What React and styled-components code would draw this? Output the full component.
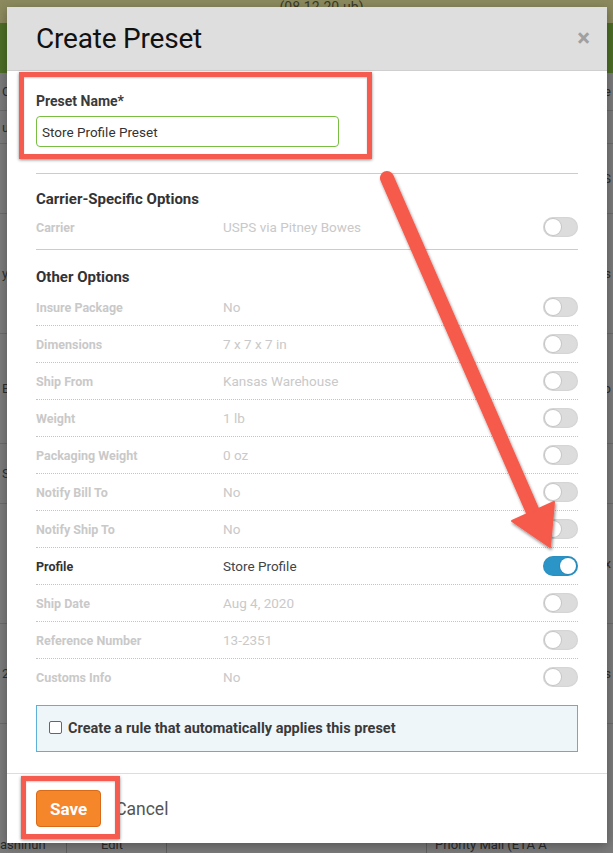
import React from 'react';
import styled, { createGlobalStyle } from 'styled-components';

const GlobalStyle = createGlobalStyle`
  html, body {
    margin: 0;
    padding: 0;
    background: #7b7b7b;
  }
  * { box-sizing: border-box; }
`;

const Page = styled.div`
  position: relative;
  width: 613px;
  height: 853px;
  overflow: hidden;
  font-family: Roboto, "Liberation Sans", Arial, sans-serif;
  background: #7b7b7b;
  display: flex;
  flex-direction: column;
`;

const BgTop = styled.div`
  height: 23px;
  background: #8b895d;
  color: #3a3a2a;
  font-size: 14px;
  text-align: center;
  line-height: 14px;
  padding: 0 0 0 30px;
`;

const BgGreen = styled.div`
  height: 50px;
  background: #4d6d26;
`;

const BgRow = styled.div`
  height: ${p => p.$h || 37}px;
  border-bottom: 1px solid #6a6a6a;
  display: flex;
  align-items: center;
  justify-content: space-between;
  padding: 0 2px;
  color: #2e2e2e;
  font-size: 13px;
`;

const BgBottom = styled.div`
  margin-top: auto;
  height: 14px;
  display: flex;
  align-items: flex-start;
  font-size: 13px;
  color: #2a2a2a;
  line-height: 12px;
`;

const BgCell = styled.div`
  width: ${p => p.$w}px;
  padding-left: ${p => p.$pad || 0}px;
  border-left: ${p => (p.$border ? '1px solid #606060' : 'none')};
  height: 100%;
`;

const Modal = styled.div`
  position: absolute;
  top: 7px;
  left: 7px;
  width: 600px;
  height: 836px;
  background: #fff;
  display: flex;
  flex-direction: column;
  box-shadow: 0 3px 10px rgba(0, 0, 0, 0.3);
`;

const Header = styled.div`
  height: 64px;
  flex: 0 0 auto;
  background: #dedede;
  border-bottom: 1px solid #cfcfcf;
  display: flex;
  align-items: center;
  justify-content: space-between;
  padding: 0 17px 0 29px;
`;

const Title = styled.h2`
  margin: 0;
  font-size: 28px;
  font-weight: 400;
  color: #111;
  letter-spacing: -0.2px;
`;

const Close = styled.span`
  font-size: 24px;
  font-weight: 700;
  color: #a0a0a0;
  line-height: 1;
  margin-top: -2px;
`;

const Body = styled.div`
  flex: 1 1 auto;
  padding: 22px 29px 0;
  display: flex;
  flex-direction: column;
`;

const FieldLabel = styled.label`
  font-size: 14px;
  font-weight: 700;
  color: #3a3a3a;
  line-height: 16px;
`;

const TextInput = styled.div`
  margin-top: 7px;
  width: 303px;
  height: 31px;
  border: 1px solid #79bd43;
  border-radius: 4px;
  display: flex;
  align-items: center;
  padding-left: 5px;
  font-size: 13.5px;
  color: #333;
`;

const Divider = styled.div`
  height: 1px;
  background: #cccccc;
  margin-top: ${p => p.$mt}px;
`;

const SectionTitle = styled.div`
  font-size: 15px;
  font-weight: 700;
  color: #333;
  line-height: 18px;
  margin-top: ${p => p.$mt}px;
`;

const Row = styled.div`
  height: ${p => (p.$first ? 36 : 37)}px;
  margin-top: ${p => p.$mt || 0}px;
  border-top: ${p => (p.$first ? 'none' : '1px dotted #c4c4c4')};
  display: flex;
  align-items: center;
  font-size: 12.5px;
  color: ${p => (p.$active ? '#333' : '#c9c9c9')};
`;

const RowLabel = styled.div`
  width: 187px;
  font-weight: 700;
`;

const RowValue = styled.div`
  flex: 1;
  font-size: 13.5px;
  color: ${p => (p.$active ? '#444' : '#c9c9c9')};
`;

const Toggle = styled.div`
  position: relative;
  width: 35px;
  height: 20px;
  border-radius: 10px;
  background: ${p => (p.$on ? '#2c95c8' : '#dcdcdc')};
  box-shadow: inset 0 0 2px rgba(0, 0, 0, 0.12);

  &::after {
    content: '';
    position: absolute;
    top: 2px;
    left: ${p => (p.$on ? 17 : 2)}px;
    width: 16px;
    height: 16px;
    border-radius: 50%;
    background: #fff;
    box-shadow: 0 0 0 1px ${p => (p.$on ? 'rgba(0,0,0,0.08)' : '#c6c6c6')};
  }
`;

const RuleBox = styled.div`
  margin-top: 10px;
  height: 47px;
  border: 1px solid #5fb0d9;
  background: #eff6fa;
  display: flex;
  align-items: center;
  padding-left: 12px;
  gap: 6px;
  font-size: 14.5px;
  font-weight: 700;
  color: #3a3a3a;
`;

const CheckBox = styled.span`
  width: 13px;
  height: 13px;
  border: 1px solid #666;
  border-radius: 2px;
  background: #fff;
  margin-top: -2px;
`;

const Footer = styled.div`
  flex: 0 0 auto;
  border-top: 1px solid #dddddd;
  padding: 16px 29px 16px;
  display: flex;
  align-items: center;
`;

const SaveButton = styled.button`
  height: 37px;
  padding: 0 13px;
  background: #f5862a;
  border: 1px solid #d86a19;
  border-radius: 4px;
  color: #fff;
  font-family: inherit;
  font-size: 17px;
  font-weight: 700;
`;

const CancelLink = styled.span`
  margin-left: 14px;
  font-size: 17.5px;
  color: #555;
`;

const Highlight = styled.div`
  position: absolute;
  left: ${p => p.$x}px;
  top: ${p => p.$y}px;
  width: ${p => p.$w}px;
  height: ${p => p.$h}px;
  border: 5px solid #f55b4e;
  box-shadow: 0 1px 3px rgba(0, 0, 0, 0.45), inset 0 1px 2px rgba(0, 0, 0, 0.2);
  pointer-events: none;
`;

const ArrowLayer = styled.svg`
  position: absolute;
  left: 0;
  top: 0;
  width: 613px;
  height: 853px;
  pointer-events: none;
`;

const rows = [
  { label: 'Insure Package', value: 'No' },
  { label: 'Dimensions', value: '7 x 7 x 7 in' },
  { label: 'Ship From', value: 'Kansas Warehouse' },
  { label: 'Weight', value: '1 lb' },
  { label: 'Packaging Weight', value: '0 oz' },
  { label: 'Notify Bill To', value: 'No' },
  { label: 'Notify Ship To', value: 'No' },
  { label: 'Profile', value: 'Store Profile', on: true },
  { label: 'Ship Date', value: 'Aug 4, 2020' },
  { label: 'Reference Number', value: '13-2351' },
  { label: 'Customs Info', value: 'No' },
];

const App = () => (
  <Page>
    <GlobalStyle />
    <BgTop>(08-12-20-ub)</BgTop>
    <BgGreen />
    <BgRow $h={38}><span>C</span><span>e</span></BgRow>
    <BgRow $h={33}><span>u</span><span /></BgRow>
    <BgRow $h={70}><span /><span>S</span></BgRow>
    <BgRow $h={120}><span>ys</span><span>os</span></BgRow>
    <BgRow $h={110}><span>E</span><span>o</span></BgRow>
    <BgRow $h={60}><span>S</span><span /></BgRow>
    <BgRow $h={120}><span /><span>x</span></BgRow>
    <BgRow $h={100}><span>2Y</span><span>s</span></BgRow>
    <BgBottom>
      <BgCell $w={66}>ashinun</BgCell>
      <BgCell $w={100} $pad={34} $border>Edit</BgCell>
      <BgCell $w={260} $border />
      <BgCell $w={187} $pad={8} $border>Priority Mail (ETA A</BgCell>
    </BgBottom>

    <Modal>
      <Header>
        <Title>Create Preset</Title>
        <Close>×</Close>
      </Header>
      <Body>
        <FieldLabel>Preset Name*</FieldLabel>
        <TextInput>Store Profile Preset</TextInput>
        <Divider $mt={26} />
        <SectionTitle $mt={16}>Carrier-Specific Options</SectionTitle>
        <Row $first $mt={1}>
          <RowLabel>Carrier</RowLabel>
          <RowValue>USPS via Pitney Bowes</RowValue>
          <Toggle />
        </Row>
        <Divider $mt={4} />
        <SectionTitle $mt={18}>Other Options</SectionTitle>
        {rows.map((r, i) => (
          <Row key={r.label} $first={i === 0} $mt={i === 0 ? 3 : 0} $active={r.on}>
            <RowLabel>{r.label}</RowLabel>
            <RowValue $active={r.on}>{r.value}</RowValue>
            <Toggle $on={r.on} />
          </Row>
        ))}
        <RuleBox>
          <CheckBox />
          Create a rule that automatically applies this preset
        </RuleBox>
      </Body>
      <Footer>
        <SaveButton>Save</SaveButton>
        <CancelLink>Cancel</CancelLink>
      </Footer>
    </Modal>

    <Highlight $x={19} $y={72} $w={353} $h={87} />
    <Highlight $x={21} $y={776} $w={99} $h={63} />

    <ArrowLayer viewBox="0 0 613 853">
      <defs>
        <filter id="arrowShadow" x="-20%" y="-20%" width="140%" height="140%">
          <feDropShadow dx="1" dy="2" stdDeviation="1.5" floodColor="#000" floodOpacity="0.45" />
        </filter>
      </defs>
      <g filter="url(#arrowShadow)" fill="#f65a4c" stroke="#f65a4c">
        <line x1="387" y1="178" x2="533" y2="512" strokeWidth="14" strokeLinecap="round" />
        <polygon points="550,547 512,521 554,502" strokeWidth="2" strokeLinejoin="round" />
      </g>
    </ArrowLayer>
  </Page>
);

export default App;
